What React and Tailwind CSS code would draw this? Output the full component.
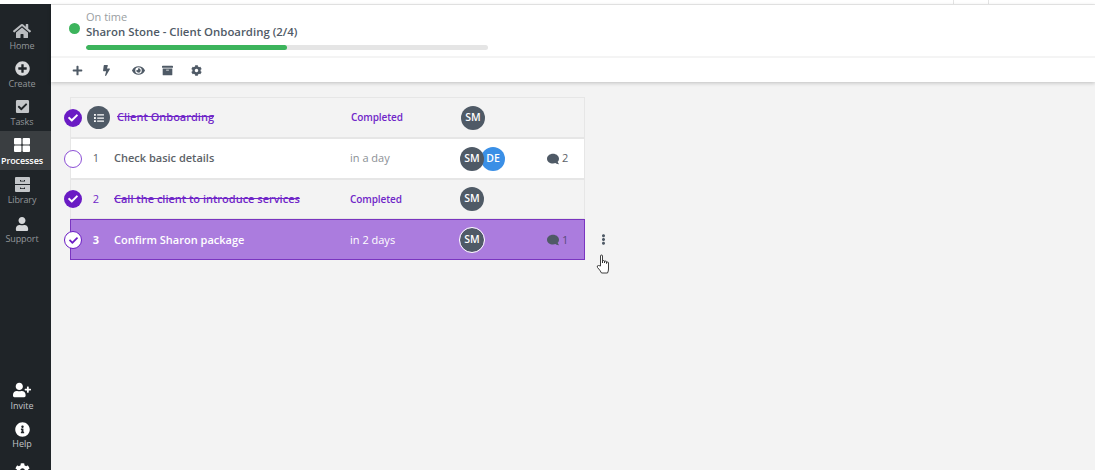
import { FaHome, FaPlusCircle, FaCheckSquare, FaUser, FaUserPlus, FaInfoCircle, FaCog, FaPlus, FaBolt, FaEye, FaArchive, FaList, FaComment, FaEllipsisV, FaCheck } from 'react-icons/fa';

function GridIcon() {
  return (
    <svg width="16" height="14" viewBox="0 0 16 14" fill="#fff">
      <rect x="0" y="0" width="7.4" height="6.4" rx="1" />
      <rect x="8.6" y="0" width="7.4" height="6.4" rx="1" />
      <rect x="0" y="7.6" width="7.4" height="6.4" rx="1" />
      <rect x="8.6" y="7.6" width="7.4" height="6.4" rx="1" />
    </svg>
  );
}

function DrawerIcon() {
  return (
    <svg width="15" height="15" viewBox="0 0 15 15" fill="#c3c6c9">
      <path d="M1 0h13a1 1 0 0 1 1 1v6H0V1a1 1 0 0 1 1-1zM5 3v1.500h5V3H9v.7H6V3zM0 8h15v6a1 1 0 0 1-1 1H1a1 1 0 0 1-1-1zM5 10.500V12h5v-1.500H9v.7H6v-.7z" fillRule="evenodd" />
    </svg>
  );
}

function HandCursor() {
  return (
    <svg width="14" height="20" viewBox="0 0 14 20" fill="#fff" stroke="#2a2a2a" strokeWidth="0.9" strokeLinejoin="round">
      <path d="M4.500 12L4.500 2a1 1 0 0 1 2 0L6.500 9L6.500 7.500a1 1 0 0 1 2 0L8.500 9L8.500 8a1 1 0 0 1 2 0L10.500 9.500L10.500 9a1 1 0 0 1 2 0L12.500 15q0 2-1 4L5.500 19Q4 16 1.500 13.500Q.5 11.500 2.500 11.500z" />
    </svg>
  );
}

const navTop = [
  { label: 'Home', icon: <FaHome size={18} className="text-[#b9bcbf]" />, h: 'h-[38px]' },
  { label: 'Create', icon: <FaPlusCircle size={15} className="text-[#d5d7d9]" />, h: 'h-[38px]' },
  { label: 'Tasks', icon: <FaCheckSquare size={15} className="text-[#c3c6c9]" />, h: 'h-[38px]' },
  { label: 'Processes', icon: <GridIcon />, h: 'h-[39px]', active: true },
  { label: 'Library', icon: <DrawerIcon />, h: 'h-[39px]' },
  { label: 'Support', icon: <FaUser size={14} className="text-[#d5d7d9]" />, h: 'h-[40px]' },
];

function NavItem({ label, icon, h, active }) {
  return (
    <div className={`flex flex-col items-center justify-center gap-[2px] pt-[2px] pr-[7px] ${h} ${active ? 'bg-[#3a3e41] text-white font-semibold' : 'text-[#92969a]'}`}>
      <div className="h-[15px] flex items-center justify-center">{icon}</div>
      <span className="text-[9px] leading-[11px] tracking-[-0.1px]">{label}</span>
    </div>
  );
}

function Avatar({ text, blue, ring }) {
  return (
    <div className={`w-[24px] h-[24px] rounded-full flex items-center justify-center text-[10.5px] font-semibold text-white shrink-0 ${blue ? 'bg-[#3a8fe6]' : 'bg-[#4f5a66]'} ${ring ? 'outline outline-1 outline-white' : ''}`}>
      {text}
    </div>
  );
}

function Check({ state }) {
  if (state === 'done') {
    return (
      <div className="w-[18px] h-[18px] rounded-full bg-[#6a1bc4] flex items-center justify-center shrink-0">
        <FaCheck size={10} className="text-white" />
      </div>
    );
  }
  if (state === 'white') {
    return (
      <div className="w-[18px] h-[18px] rounded-full bg-white border border-[#6a1bc4] flex items-center justify-center shrink-0">
        <FaCheck size={9} className="text-[#6a1bc4]" />
      </div>
    );
  }
  return <div className="w-[18px] h-[18px] rounded-full bg-white border border-[#8c4fd6] shrink-0" />;
}

function Row({ num, title, due, check, avatars, comments, tone, head, h }) {
  const bg = tone === 'white' ? 'bg-white border-[#e6e6e6]' : tone === 'purple' ? 'bg-[#ab7cde] border-[#7a35c0] pt-px' : 'bg-[#f3f3f3] border-[#e6e6e6]';
  const done = check === 'done';
  const titleCls = done ? 'text-[#7026c8] line-through' : tone === 'purple' ? 'text-white' : 'text-[#5c6268]';
  const dueCls = done ? 'text-[#7026c8] font-semibold text-[10px] tracking-[-0.1px]' : tone === 'purple' ? 'text-white text-[11px]' : 'text-[#8b9096] text-[11px]';
  return (
    <div className={`flex items-center w-[515px] border ${bg} ${h}`}>
      <div className="-ml-[7px] w-[18px] shrink-0"><Check state={check} /></div>
      {head ? (
        <div className="ml-[5px] w-[23px] h-[23px] rounded-full bg-[#4f5a66] flex items-center justify-center shrink-0">
          <FaList size={10} className="text-white" />
        </div>
      ) : (
        <div className={`ml-[8px] w-[12px] text-[11px] text-center shrink-0 ${tone === 'purple' ? 'text-white font-bold' : done ? 'text-[#7026c8]' : 'text-[#5c6268]'}`}>{num}</div>
      )}
      <div className={`${head ? 'ml-[7px] w-[234px]' : 'ml-[12px] w-[236px]'} text-[11px] font-semibold whitespace-nowrap shrink-0 ${titleCls}`}>{title}</div>
      <div className={`w-[110px] shrink-0 ${dueCls}`}>{due}</div>
      <div className="flex w-[87px] shrink-0">
        {avatars.map((a, i) => (
          <div key={a} className={i > 0 ? '-ml-[3px]' : 'relative z-10'}>
            <Avatar text={a} blue={a === 'DE'} ring={tone === 'purple'} />
          </div>
        ))}
      </div>
      {comments && (
        <div className="flex items-center gap-[3px]">
          <FaComment size={12} className="text-[#4f5a66] -scale-x-100" />
          <span className={`text-[11px] ${tone === 'purple' ? 'text-[#5a4a78]' : 'text-[#5c6268]'}`}>{comments}</span>
        </div>
      )}
    </div>
  );
}

export default function App() {
  return (
    <div className="w-[1095px] h-[470px] overflow-hidden bg-white flex flex-col font-['Open_Sans',sans-serif]">
      {/* top strip */}
      <div className="h-[5px] shrink-0 flex justify-end border-b border-[#ececec]">
        <div className="w-[36px] border-x border-[#e4e4e4] mr-[106px]" />
      </div>

      <div className="flex-1 flex min-h-0">
        {/* sidebar */}
        <div className="w-[51px] shrink-0 -mt-px bg-[#1f2428] flex flex-col justify-between pt-[13px] overflow-hidden">
          <div className="flex flex-col">
            {navTop.map((n) => <NavItem key={n.label} {...n} />)}
          </div>
          <div className="flex flex-col text-white pr-[7px] -mb-[17px]">
            <div className="flex flex-col items-center h-[39px] justify-center gap-[1px]">
              <FaUserPlus size={18} />
              <span className="text-[9px] leading-[11px] text-[#c3c6c9]">Invite</span>
            </div>
            <div className="flex flex-col items-center h-[39px] mt-px justify-center gap-[1px]">
              <FaInfoCircle size={15} />
              <span className="text-[9px] leading-[11px] text-[#c3c6c9]">Help</span>
            </div>
            <div className="flex flex-col items-center h-[24px] mt-[8px]">
              <FaCog size={15} />
            </div>
          </div>
        </div>

        {/* main */}
        <div className="flex-1 min-w-0 bg-[#f3f3f3] flex flex-col">
          <div className="bg-white shadow-[0_1px_4px_rgba(0,0,0,0.22)] shrink-0">
            <div className="h-[53px] flex items-start pl-[18px] border-b-2 border-[#f4f4f4]">
              <div className="mt-[18px] w-[11px] h-[11px] rounded-full bg-[#3cb45c] shrink-0" />
              <div className="ml-[6px] pt-[5px] w-[402px]">
                <div className="text-[11px] leading-[14px] text-[#9a9ea2]">On time</div>
                <div className="text-[11.400px] leading-[16px] font-semibold text-[#4f5a66] whitespace-nowrap">Sharon Stone - Client Onboarding (2/4)</div>
                <div className="mt-[5px] h-[5px] rounded-full bg-[#e5e5e5] overflow-hidden">
                  <div className="h-full w-1/2 bg-[#3cb45c] rounded-full" />
                </div>
              </div>
            </div>
            <div className="h-[24px] flex items-center pl-[21px] text-[#4f5a66]">
              <div className="w-[29px]"><FaPlus size={11} /></div>
              <div className="w-[31px]"><FaBolt size={11} /></div>
              <div className="w-[30px]"><FaEye size={13} /></div>
              <div className="w-[29px]"><FaArchive size={11} /></div>
              <div><FaCog size={11} /></div>
            </div>
          </div>

          <div className="pl-[19px] pt-[15px] relative">
            <Row head h="h-[41px]" title="Client Onboarding" due="Completed" check="done" avatars={['SM']} />
            <Row h="h-[41px]" num="1" title="Check basic details" due="in a day" check="empty" avatars={['SM', 'DE']} comments="2" tone="white" />
            <Row h="h-[40px]" num="2" title="Call the client to introduce services" due="Completed" check="done" avatars={['SM']} />
            <div className="flex items-center">
              <Row h="h-[41px]" num="3" title="Confirm Sharon package" due="in 2 days" check="white" avatars={['SM']} comments="1" tone="purple" />
              <FaEllipsisV size={11} className="ml-[13px] text-[#4f5a66]" />
            </div>
            <div className="absolute left-[545px] top-[172px]"><HandCursor /></div>
          </div>
        </div>
      </div>
    </div>
  );
}
